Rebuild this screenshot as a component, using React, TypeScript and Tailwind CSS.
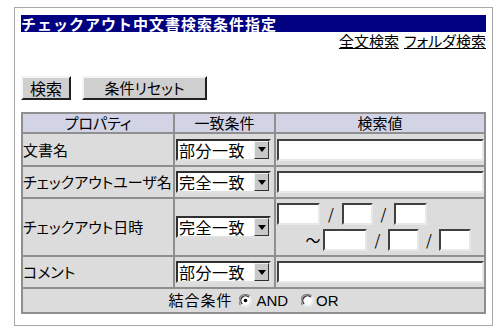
const jp = "font-['Noto_Sans_CJK_JP',sans-serif] [font-feature-settings:'palt']";

function Btn({ label, w, size }: { label: string; w: string; size: string }) {
  return (
    <button
      className={`${w} ${size} h-[24px] bg-[#cfcfcf] border-2 border-t-[#f4f4f4] border-l-[#f4f4f4] border-r-[#202020] border-b-[#202020] leading-[18px] text-black`}
    >
      {label}
    </button>
  );
}

function TextBox({ w }: { w: string }) {
  return (
    <span
      className={`inline-block ${w} h-[22px] bg-white border-2 border-t-[#404040] border-l-[#404040] border-r-[#e8e8e8] border-b-[#e8e8e8] align-middle`}
    />
  );
}

function Select({ value }: { value: string }) {
  return (
    <div className="flex w-[95px] h-[22px] bg-white border-2 border-t-[#303030] border-l-[#303030] border-r-[#e0e0e0] border-b-[#e0e0e0]">
      <span className="flex-1 min-w-0 pl-[1px] text-[16px] leading-[18px] tracking-[0.5px] text-black whitespace-nowrap [font-feature-settings:normal]">
        {value}
      </span>
      <span className="w-[15px] shrink-0 h-full bg-[#c8c8c8] border border-t-[#f0f0f0] border-l-[#f0f0f0] border-r-[#303030] border-b-[#303030] flex items-center justify-center">
        <svg width="8" height="5" viewBox="0 0 8 5">
          <path d="M0 0H8L4 5Z" fill="#000" />
        </svg>
      </span>
    </div>
  );
}

function Radio({ checked }: { checked: boolean }) {
  return (
    <svg width="13" height="13" viewBox="0 0 13 13" className="inline-block align-[-1px]">
      <path d="M11 2.5A6 6 0 0 0 1.5 11" stroke="#808080" strokeWidth="1.2" fill="none" />
      <path d="M10.5 2A6 6 0 0 1 2 10.5" stroke="#f0f0f0" strokeWidth="1.2" fill="none" />
      <circle cx="6.5" cy="6.5" r="4.6" fill="#fff" />
      <path d="M9.8 3.2A4.6 4.6 0 0 0 3.2 9.8" stroke="#202020" strokeWidth="1.2" fill="none" />
      {checked && <circle cx="6.5" cy="6.5" r="1.8" fill="#000" />}
    </svg>
  );
}

const cell = "border-2 border-[#8f8f8f] bg-[#dcdcdc] p-0";

export default function App() {
  return (
    <div className={`w-[499px] h-[336px] bg-white ${jp} text-black`}>
      <div className="ml-[14px] mt-[7px] w-[479px] h-[319px] border border-[#a8a8a8] pt-[7px] pl-[6px] pr-[6px]">
        <div className="h-[17px] bg-[#000080] text-white font-bold text-[15px] leading-[17px] tracking-[1px] whitespace-nowrap [font-feature-settings:normal]">
          チェックアウト中文書検索条件指定
        </div>
        <div className="flex justify-end gap-[5px] h-[17px] text-[15px] leading-[17px] underline">
          <span>全文検索</span>
          <span>フォルダ検索</span>
        </div>
        <div className="flex gap-[11px] mt-[27px]">
          <Btn label="検索" w="w-[50px]" size="text-[16px]" />
          <Btn label="条件リセット" w="w-[125px]" size="text-[15px]" />
        </div>
        <table className="mt-[12px] w-[465px] border-collapse border-2 border-[#8f8f8f] text-[15px] leading-[18px]">
          <colgroup>
            <col className="w-[152px]" />
            <col className="w-[101px]" />
            <col />
          </colgroup>
          <tbody>
            <tr className="h-[20px]">
              <td className={`${cell} !bg-[#d3d3e6] text-center`}>プロパティ</td>
              <td className={`${cell} !bg-[#d3d3e6] text-center`}>一致条件</td>
              <td className={`${cell} !bg-[#d3d3e6] text-center`}>検索値</td>
            </tr>
            <tr className="h-[33px]">
              <td className={cell}>文書名</td>
              <td className={`${cell} pl-[1px]`}>
                <Select value="部分一致" />
              </td>
              <td className={`${cell} pl-[1px]`}>
                <TextBox w="w-[207px]" />
              </td>
            </tr>
            <tr className="h-[32px]">
              <td className={`${cell} whitespace-nowrap`}>チェックアウトユーザ名</td>
              <td className={`${cell} pl-[1px]`}>
                <Select value="完全一致" />
              </td>
              <td className={`${cell} pl-[1px]`}>
                <TextBox w="w-[207px]" />
              </td>
            </tr>
            <tr className="h-[58px]">
              <td className={cell}>チェックアウト日時</td>
              <td className={`${cell} pl-[1px]`}>
                <Select value="完全一致" />
              </td>
              <td className={`${cell} pl-[1px]`}>
                <div className="flex flex-col gap-[4px]">
                  <div className="flex items-center">
                    <TextBox w="w-[43px]" />
                    <span className="w-[22px] text-center">/</span>
                    <TextBox w="w-[31px]" />
                    <span className="w-[21px] text-center">/</span>
                    <TextBox w="w-[33px]" />
                  </div>
                  <div className="flex items-center pl-[26px]">
                    <span className="w-[20px] text-center">〜</span>
                    <TextBox w="w-[44px]" />
                    <span className="w-[21px] text-center">/</span>
                    <TextBox w="w-[31px]" />
                    <span className="w-[20px] text-center">/</span>
                    <TextBox w="w-[32px]" />
                  </div>
                </div>
              </td>
            </tr>
            <tr className="h-[32px]">
              <td className={cell}>コメント</td>
              <td className={`${cell} pl-[1px]`}>
                <Select value="部分一致" />
              </td>
              <td className={`${cell} pl-[1px]`}>
                <TextBox w="w-[207px]" />
              </td>
            </tr>
            <tr className="h-[25px]">
              <td colSpan={3} className={`${cell} text-center`}>
                <span className="tracking-[1px]">結合条件</span>
                <span className="inline-block w-[7px]" />
                <Radio checked />
                <span className="font-['Liberation_Sans',sans-serif] text-[15px] ml-[4px]">AND</span>
                <span className="inline-block w-[13px]" />
                <Radio checked={false} />
                <span className="font-['Liberation_Sans',sans-serif] text-[15px] ml-[2px]">OR</span>
              </td>
            </tr>
          </tbody>
        </table>
      </div>
    </div>
  );
}
